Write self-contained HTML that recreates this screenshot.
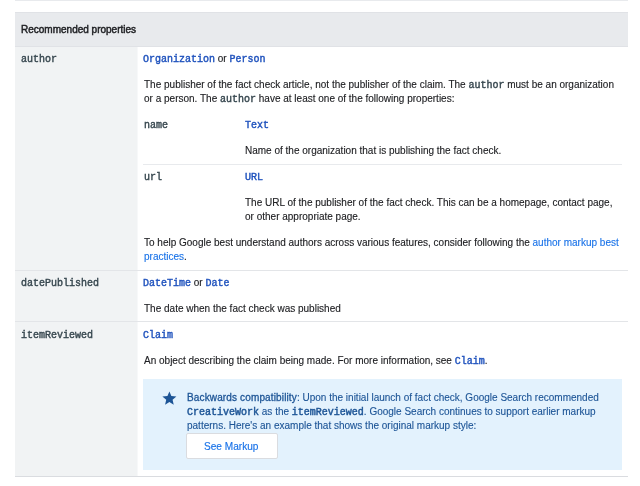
<!DOCTYPE html>
<html><head><meta charset="utf-8">
<style>
html,body{margin:0;padding:0;background:#fff;width:640px;height:486px;overflow:hidden;position:relative}
body{font-family:"Liberation Sans",sans-serif;color:#202124;-webkit-text-stroke:0.12px currentColor}
.b{position:absolute}
.l{will-change:transform;position:absolute;white-space:nowrap;font-size:10px;line-height:14px;height:14px}
code,.c{font-family:"Liberation Mono",monospace;font-size:10px}
.k{color:#37474f;-webkit-text-stroke:0.4px #37474f}
.t{color:#1f52bd;-webkit-text-stroke:0.4px #1f52bd}
a{color:#1a73e8;text-decoration:none}
.co{color:#1d5596}
.co code{-webkit-text-stroke:0.45px #1d5596}
</style></head><body>
<!-- top line -->
<div class="b" style="left:15px;top:0;width:613px;height:1px;background:#e8eaed"></div>
<!-- header -->
<div class="b" style="left:15px;top:12px;width:613px;height:34px;background:#e8eaed"></div>
<div class="b" style="left:15px;top:12px;width:613px;height:1px;background:#e0e2e6"></div>
<div class="b" style="left:15px;top:46px;width:613px;height:1px;background:#e0e2e6"></div>
<!-- left column -->
<div class="b" style="left:15px;top:47px;width:122px;height:429px;background:#f1f3f4"></div>
<div class="b" style="left:137px;top:47px;width:1px;height:429px;background:#f7f8f9"></div>
<!-- row lines -->
<div class="b" style="left:15px;top:270px;width:613px;height:1px;background:#e3e5e8"></div>
<div class="b" style="left:15px;top:321px;width:613px;height:1px;background:#e3e5e8"></div>
<div class="b" style="left:15px;top:476px;width:613px;height:1px;background:#dadce0"></div>
<!-- nested line -->
<div class="b" style="left:143px;top:164px;width:479px;height:1px;background:#e8eaed"></div>

<div class="l" style="left:21px;top:23px;-webkit-text-stroke:0.45px #202124">Recommended properties</div>

<div class="l c k" style="left:21px;top:53px">author</div>
<div class="l" style="left:143px;top:52px"><code class="t">Organization</code> or <code class="t">Person</code></div>
<div class="l" style="left:144px;top:78px">The publisher of the fact check article, not the publisher of the claim. The <code class="k">author</code> must be an organization</div>
<div class="l" style="left:144px;top:92px">or a person. The <code class="k">author</code> have at least one of the following properties:</div>

<div class="l c k" style="left:144px;top:119px">name</div>
<div class="l" style="left:245px;top:118px"><code class="t">Text</code></div>
<div class="l" style="left:245px;top:144px">Name of the organization that is publishing the fact check.</div>

<div class="l c k" style="left:144px;top:171px">url</div>
<div class="l" style="left:245px;top:170px"><code class="t">URL</code></div>
<div class="l" style="left:245px;top:196px">The URL of the publisher of the fact check. This can be a homepage, contact page,</div>
<div class="l" style="left:245px;top:210px">or other appropriate page.</div>

<div class="l" style="left:144px;top:236px">To help Google best understand authors across various features, consider following the <a>author markup best</a></div>
<div class="l" style="left:144px;top:250px"><a>practices</a>.</div>

<div class="l c k" style="left:21px;top:277px">datePublished</div>
<div class="l" style="left:143px;top:276px"><code class="t">DateTime</code> or <code class="t">Date</code></div>
<div class="l" style="left:144px;top:302px">The date when the fact check was published</div>

<div class="l c k" style="left:21px;top:329px">itemReviewed</div>
<div class="l" style="left:143px;top:328px"><code class="t">Claim</code></div>
<div class="l" style="left:144px;top:354px">An object describing the claim being made. For more information, see <code class="t">Claim</code>.</div>

<!-- callout -->
<div class="b" style="left:143px;top:379px;width:479px;height:91px;background:#e3f2fd"></div>
<svg class="b" style="left:160.6px;top:389.8px" width="16.8" height="16.8" viewBox="0 0 24 24"><path fill="#1d5596" d="M12 17.27L18.18 21l-1.64-7.03L22 9.24l-7.19-.61L12 2 9.19 8.63 2 9.24l5.46 4.73L5.82 21z"/></svg>
<div class="l co" style="left:187px;top:391px"><span style="-webkit-text-stroke:0.3px #1d5596;letter-spacing:0.14px">Backwards compatibility</span>: Upon the initial launch of fact check, Google Search recommended</div>
<div class="l co" style="left:187px;top:405px"><code>CreativeWork</code> as the <code>itemReviewed</code>. Google Search continues to support earlier markup</div>
<div class="l co" style="left:187px;top:419px">patterns. Here's an example that shows the original markup style:</div>
<div class="b" style="left:186px;top:433px;width:89.5px;height:23.5px;background:#fff;border:1px solid #dadce0;border-radius:2px"></div>
<div class="l" style="left:204.3px;top:440px;color:#1a73e8;font-size:10.1px;-webkit-text-stroke:0.15px #1a73e8">See Markup</div>
</body></html>
